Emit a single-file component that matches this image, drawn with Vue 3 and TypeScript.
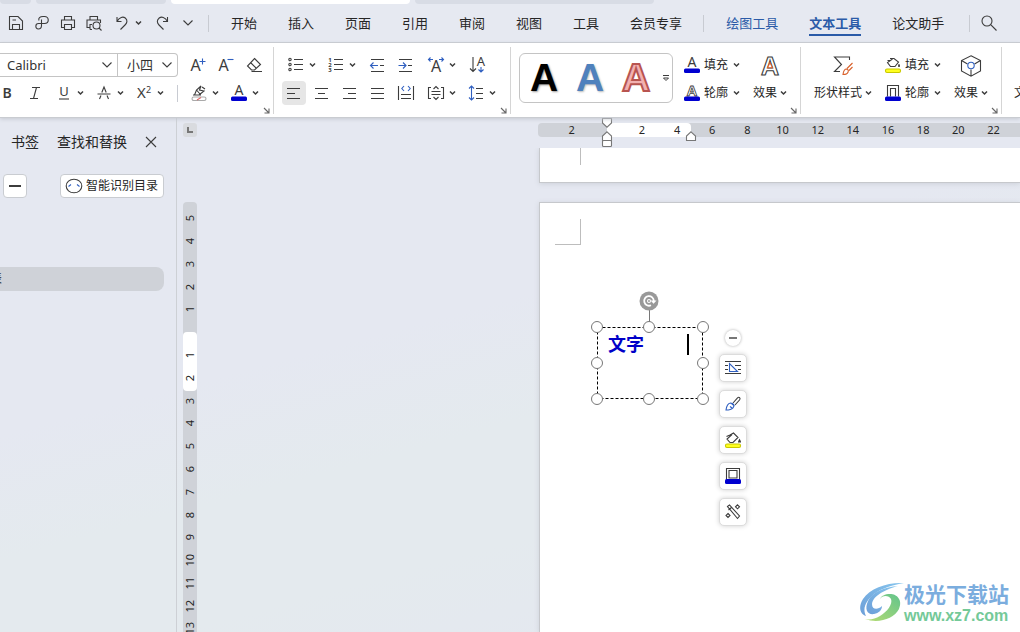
<script setup lang="ts">
import { h, ref } from 'vue'

interface Glyph {
  w: number
  h: number
  body: string
}

const INK = '#3c3c3c'
const BLUE = '#2f5fc0'
const NAVY = '#0000d0'

const letter = (t: string, x: number, y: number, size: number, extra = '') =>
  `<text x="${x}" y="${y}" font-size="${size}" text-anchor="middle" fill="${INK}" stroke="none" font-family="Noto Sans, sans-serif" ${extra}>${t}</text>`

const rules = (rows: number[][]) => `<path d="${rows.map(([x1, x2, y]) => `M${x1} ${y}H${x2}`).join('')}"/>`

const glyphs: Record<string, Glyph> = {
  save: { w: 16, h: 16, body: '<path d="M1.5 1.5H10L14.5 6V14.5H1.5ZM4.5 14.5V9.5H11.500V14.5M4.500 5H8"/>' },
  share: { w: 16, h: 16, body: '<path d="M5 5.500C4 3 6 1.500 9 1.500H10.500C15.500 1.500 15.500 8.500 10.500 8.500H4.500C1 8.500 1 14 4.300 14C6.500 14 7.500 12.500 7.500 10.500V4.500"/>' },
  print: { w: 16, h: 16, body: '<path d="M4.500 5V1.500H11.500V5M4.500 12.500H1.500V5H14.500V12.500H11.500M4.500 9.500H11.500V14.500H4.500Z"/>' },
  preview: { w: 16, h: 16, body: '<path d="M4 5V1.500H11.500V5M4 12.500H1V5H14.500V8M4 14.500V9.500H6M4 14.500H6"/><circle cx="10.500" cy="10.500" r="3.500"/><path d="M13 13L15.500 15.500"/>' },
  undo: { w: 16, h: 16, body: '<path d="M3 2V6.500H7.500M3 6.500C5.500 2 9 1.300 11.300 3C14 5.200 13 8 11 10L6.500 14.500"/>' },
  redo: { w: 16, h: 16, body: '<path d="M13.500 2V6.500H9M13.500 6.500C11 2 7.500 1.300 5.200 3C2.500 5.200 3 8 5 10L9.500 14.500"/>' },
  chevron: { w: 12, h: 8, body: '<path d="M1.500 1.500L6 6L10.500 1.500"/>' },
  caret: { w: 7, h: 6, body: '<path d="M1 1.500L3.500 4L6 1.500" stroke-width="1.500"/>' },
  search: { w: 16, h: 16, body: '<circle cx="6" cy="6" r="5"/><path d="M9.700 9.700L15.500 15.500"/>' },
  grow: { w: 16, h: 16, body: letter('A', 5.5, 14, 16) + `<path d="M9.500 4.500H15.500M12.500 1.500V7.500" stroke="${BLUE}"/>` },
  shrink: { w: 16, h: 16, body: letter('A', 5.5, 14, 16) + `<path d="M9.500 2.500H15.500" stroke="${BLUE}"/>` },
  eraser: { w: 16, h: 16, body: '<path d="M8.500 1.500L14.500 7.500L8.500 13H5.500L1.500 9ZM4.500 5.500L10.500 11.500M5.500 14.500H16"/>' },
  bold: { w: 16, h: 16, body: letter('B', 7, 13, 14, 'font-weight="600"') },
  italic: { w: 16, h: 16, body: '<path d="M4 2.500H12M2 13.500H10M8.500 2.500L5.500 13.500"/>' },
  underline: { w: 16, h: 16, body: letter('U', 8, 11, 13) + '<path d="M3 14H13"/>' },
  strike: { w: 16, h: 16, body: '<path d="M5.800 7.500L8 2L10.200 7.500M1.500 9H14.500M5 10.500L3.500 14M11 10.500L12.500 14"/>' },
  super: { w: 16, h: 16, body: letter('X', 5.5, 13, 15) + letter('2', 12.5, 8, 9) },
  marker: { w: 16, h: 16, body: '<path d="M3.500 10L5.500 5L10 1L8.500 5L13 6L8 10ZM5.500 5L9 9M11 2L14 4M2 10H10"/><rect x="1" y="12" width="14" height="3.500" rx="1.700" stroke="#aaa"/><path d="M6 15L10 12.500" stroke="#d66"/>' },
  fontcolor: { w: 16, h: 16, body: letter('A', 8, 10, 14) + `<rect x="0" y="11.500" width="16" height="4.500" rx="1.500" fill="${NAVY}" stroke="none"/>` },
  bullets: { w: 16, h: 16, body: rules([[6, 15, 2.5], [6, 15, 7.5], [6, 15, 12.5]]) + '<circle cx="2" cy="2.500" r="1.200"/><circle cx="2" cy="7.500" r="1.200"/><circle cx="2" cy="12.500" r="1.200"/>' },
  numbers: { w: 16, h: 16, body: rules([[6, 15, 2.5], [6, 15, 7.5], [6, 15, 12.5]]) + letter('1', 2, 5, 6, 'font-weight="700"') + letter('2', 2, 10, 6, 'font-weight="700"') + letter('3', 2, 15, 6, 'font-weight="700"') },
  outdent: { w: 16, h: 16, body: rules([[1, 14, 2.5], [10, 14, 8.5], [1, 14, 14.5]]) + `<path d="M8 8.500H0.500M3.500 5.500L0.500 8.500L3.500 11.500" stroke="${BLUE}"/>` },
  indent: { w: 16, h: 16, body: rules([[1, 14, 2.5], [10, 14, 8.5], [1, 14, 14.5]]) + `<path d="M0.500 8.500H8M5 5.500L8 8.500L5 11.500" stroke="${BLUE}"/>` },
  scale: { w: 16, h: 16, body: letter('A', 8, 15, 16) + `<path d="M5 2.500H0.800M2.500 0.500L0.500 2.500L2.500 4.500M11 2.500H15.200M13.500 0.500L15.500 2.500L13.500 4.500" stroke="${BLUE}"/>` },
  sort: { w: 18, h: 16, body: letter('A', 12, 9, 13) + `<path d="M4 0V14.500M1 11.500L4 14.500L7 11.500"/><path d="M12 10V15M9.500 12.500L12 15L14.500 12.500" stroke="${BLUE}"/>` },
  left: { w: 16, h: 16, body: rules([[1, 14, 3.5], [1, 9, 8.5], [1, 14, 13.5]]) },
  center: { w: 16, h: 16, body: rules([[1, 14, 3.5], [4, 11, 8.5], [1, 14, 13.5]]) },
  right: { w: 16, h: 16, body: rules([[1, 14, 3.5], [6, 14, 8.5], [1, 14, 13.5]]) },
  justify: { w: 16, h: 16, body: rules([[1, 14, 3.5], [1, 14, 8.5], [1, 14, 13.5]]) },
  distribute: { w: 16, h: 16, body: `<path d="M0.500 1V15M15.500 1V15M3 9.500H13M3 13.500H13"/><path d="M6 1L3.800 3.500L6 6M10 1L12.200 3.500L10 6" stroke="${BLUE}"/>` },
  vertical: { w: 16, h: 16, body: '<path d="M3 2.500H0.500V13.500H3M13 2.500H15.500V13.500H13M3.500 6.500H12.500M3.500 9.500H12.500M5.500 4L8 1.500L10.500 4M5.500 12L8 14.500L10.500 12"/>' },
  spacing: { w: 16, h: 16, body: rules([[8, 15, 3.5], [8, 15, 8.5], [8, 15, 13.5]]) + `<path d="M3.500 1V15M1 3.500L3.500 1L6 3.500M1 12.500L3.500 15L6 12.500" stroke="${BLUE}"/>` },
  outlinecolor: { w: 16, h: 16, body: `<text x="8" y="10.500" font-size="15" font-weight="700" text-anchor="middle" fill="#fff" stroke="${INK}" stroke-width="0.800" font-family="Liberation Sans, sans-serif">A</text><rect x="0" y="11.500" width="16" height="4.500" rx="1.500" fill="${NAVY}" stroke="none"/>` },
  effectA: { w: 22, h: 22, body: `<text x="11" y="20" font-size="25" font-weight="700" text-anchor="middle" fill="#fff" stroke="${INK}" font-family="Liberation Sans, sans-serif">A</text><path d="M11 7.500L13.500 12.800H8.500Z" fill="#fff" stroke="#d8602a"/>` },
  shape: { w: 22, h: 22, body: '<path d="M17.500 5V2H2.500L9.500 9.500L2.500 16.500H8"/><path d="M20.500 8L15 13.500M20.500 12L17 15.500M11 19.500C11.500 16 12 14 14.500 14C17.500 14.500 17 19.500 11 19.500Z" stroke="#d8602a"/>' },
  cube: { w: 22, h: 22, body: `<path d="M11 0.800L20.500 5.500V16L11 21.200L1.500 16V5.500ZM1.500 5.500L7.500 9M20.500 5.500L14.500 9M11 14.500V21"/><circle cx="11" cy="10.500" r="3.200" stroke="${BLUE}"/>` },
  fill: { w: 16, h: 16, body: '<path d="M5 1.500H9L13.500 5L10 9.500H5.500L2.500 5.500L7.500 2M2.500 3.500H5M14 7V9.500"/><circle cx="14" cy="9" r="1" fill="#3c3c3c" stroke="none"/><rect x="0.500" y="12" width="15" height="3.500" rx="1.500" fill="#ffff20" stroke="#c9c900"/>' },
  frame: { w: 16, h: 16, body: `<path d="M2.500 11.500V0.500H13.500V11.500M5.500 11.500V3.500H10.500V11.500"/><rect x="0" y="11.500" width="16" height="4.500" rx="1.500" fill="${NAVY}" stroke="none"/>` },
  launcher: { w: 7, h: 7, body: '<path d="M1 1L5.500 5.500M6 1.500V6H1.500" stroke="#666"/>' },
  more: { w: 8, h: 8, body: '<path d="M1 1.500H7M1.500 4L4 6.500L6.500 4Z" stroke-width="1"/>' },
  close: { w: 12, h: 12, body: '<path d="M1 1L11 11M11 1L1 11"/>' },
  minus: { w: 12, h: 12, body: '<path d="M0 6H12" stroke-width="2"/>' },
  face: { w: 18, h: 16, body: `<ellipse cx="9" cy="8" rx="7.800" ry="6.800"/><path d="M3.500 8.500L6 6.500M14.500 8.500L12 6.500" stroke="${BLUE}"/>` },
  wrap: { w: 16, h: 16, body: `<path d="M0 1.500H16M0 13.500H16M0 5.500H3M0 9.500H3M10 5.500H16M13 9.500H16"/><path d="M4.500 3.500V11.500H12.500Z" stroke="${BLUE}"/>` },
  brush: { w: 16, h: 16, body: `<path d="M8 7L12.500 1.800C14 0.500 16 2 14.500 4L10 9"/><path d="M1 14C1.500 10 2.500 7.500 5.500 7C8.500 7 10 9.500 8 11.800C6 14 4 14 1 14ZM5 10.500L7 12M6.500 7.500L9.500 10" stroke="${BLUE}"/>` },
  bucket: { w: 16, h: 16, body: '<path d="M5 3L8.500 1L13 5.500L8 10.500H5L2 7L7 2.500M1.500 4.500L5 3"/><path d="M14.500 6.500L16 9.500V10.500H13V9.500Z" fill="#3c3c3c" stroke="none"/><rect x="0.500" y="12" width="15" height="3.500" rx="1.500" fill="#ffff20" stroke="#c9c900"/>' },
  box: { w: 16, h: 16, body: `<path d="M1.500 11.500V0.500H14.500V11.500M4 10V2.500H12V10Z"/><rect x="0" y="11" width="16" height="5" rx="1.500" fill="${NAVY}" stroke="none"/>` },
  wand: { w: 16, h: 16, body: '<path d="M2.500 2.500L4.500 1L14.500 12L12.500 14.500ZM3.500 6L6.500 3.500"/><path d="M12.500 0.800L14.500 2.800L12.500 4.800L10.500 2.800ZM3 9.500L5 11.500L3 13.500L1 11.500Z"/>' },
  rotate: { w: 20, h: 20, body: '<circle cx="10" cy="10" r="9.500" fill="#999" stroke="none"/><path d="M12 14.300A4.800 4.800 0 1 1 14.800 10" stroke="#fff" stroke-width="1.800"/><path d="M11.500 9.500H17.500L14.600 12.800Z" fill="#fff" stroke="none"/><circle cx="10" cy="10" r="1.500" stroke="#fff"/>' },
  markdown: { w: 10, h: 10, body: '<path d="M0.500 0.500H9.500V5L5 9.200L0.500 5Z" fill="#fff" stroke="#777"/>' },
  markup: { w: 10, h: 10, body: '<path d="M5 0.800L9.500 5V9.500H0.500V5Z" fill="#fff" stroke="#777"/>' },
  markbox: { w: 10, h: 7, body: '<rect x="0.500" y="0.500" width="9" height="6" rx="1" fill="#fff" stroke="#777"/>' },
}

const Icon = (props: { name: string }) => {
  const g = glyphs[props.name]
  return h('svg', {
    class: 'icon',
    width: g.w,
    height: g.h,
    viewBox: `0 0 ${g.w} ${g.h}`,
    fill: 'none',
    stroke: INK,
    'stroke-width': 1.1,
    'aria-hidden': 'true',
    innerHTML: g.body,
  })
}

const menus = ['开始', '插入', '页面', '引用', '审阅', '视图', '工具', '会员专享']
const toolMenus = [
  { text: '绘图工具', state: 'context' },
  { text: '文本工具', state: 'context' },
  { text: '论文助手', state: '' },
]
const active = ref('文本工具')

const combosTop = ['bullets', 'numbers']
const aligns = ['left', 'center', 'right', 'justify', 'distribute']
const align = ref('left')

const across = ['2', '', '2', '4', '6', '8', '10', '12', '14', '16', '18', '20', '22']
const down = ['5', '4', '3', '2', '1', '', '1', '2', '3', '4', '5', '6', '7', '8', '9', '10', '11', '12', '13']
const floating = ['wrap', 'brush', 'bucket', 'box', 'wand']
const handles = ['nw', 'n', 'ne', 'w', 'e', 'sw', 's', 'se']
</script>

<template>
  <div class="app">
    <div class="tabstrip">
      <span class="doc first"></span>
      <span class="doc second"></span>
      <span class="doc current"></span>
      <span class="doc last"></span>
    </div>

    <header class="menubar">
      <div class="quick">
        <button v-for="n in ['save', 'share', 'print', 'preview']" :key="n" :aria-label="n"><Icon :name="n" /></button>
        <button class="undo" aria-label="undo"><Icon name="undo" /><Icon name="caret" /></button>
        <button class="redo" aria-label="redo"><Icon name="redo" /></button>
        <button class="expand" aria-label="more"><Icon name="chevron" /></button>
      </div>
      <i class="bar"></i>
      <nav class="menus">
        <button v-for="m in menus" :key="m">{{ m }}</button>
      </nav>
      <i class="bar"></i>
      <nav class="menus">
        <button v-for="m in toolMenus" :key="m.text" :class="[m.state, { active: active === m.text }]" @click="active = m.text">{{ m.text }}</button>
      </nav>
      <i class="bar late"></i>
      <button class="search" aria-label="search"><Icon name="search" /></button>
    </header>

    <section class="ribbon">
      <div class="group font">
        <div class="row">
          <div class="picks">
            <label class="pick family"><select aria-label="字体"><option>Calibri</option></select><Icon name="chevron" /></label>
            <label class="pick size"><select aria-label="字号"><option>小四</option></select><Icon name="chevron" /></label>
          </div>
          <div class="tight">
            <button v-for="n in ['grow', 'shrink', 'eraser']" :key="n" class="tool" :aria-label="n"><Icon :name="n" /></button>
          </div>
        </div>
        <div class="row styles">
          <button class="tool narrow" aria-label="bold"><Icon name="bold" /></button>
          <button class="tool narrow" aria-label="italic"><Icon name="italic" /></button>
          <button v-for="n in ['underline', 'strike', 'super']" :key="n" class="combo" :aria-label="n"><Icon :name="n" /><Icon name="caret" /></button>
          <i class="bar"></i>
          <button v-for="n in ['marker', 'fontcolor']" :key="n" class="combo" :aria-label="n"><Icon :name="n" /><Icon name="caret" /></button>
        </div>
        <button class="launch" aria-label="font settings"><Icon name="launcher" /></button>
      </div>

      <div class="group paragraph">
        <div class="row lists">
          <button v-for="n in combosTop" :key="n" class="combo" :aria-label="n"><Icon :name="n" /><Icon name="caret" /></button>
          <div class="tight">
            <button class="tool" aria-label="outdent"><Icon name="outdent" /></button>
            <button class="tool" aria-label="indent"><Icon name="indent" /></button>
          </div>
          <button class="combo" aria-label="scale"><Icon name="scale" /><Icon name="caret" /></button>
          <button class="tool" aria-label="sort"><Icon name="sort" /></button>
        </div>
        <div class="row">
          <div class="tight">
            <button v-for="n in aligns" :key="n" class="tool" :class="{ on: align === n }" :aria-label="n" @click="align = n"><Icon :name="n" /></button>
          </div>
          <button class="combo" aria-label="vertical"><Icon name="vertical" /><Icon name="caret" /></button>
          <button class="combo" aria-label="spacing"><Icon name="spacing" /><Icon name="caret" /></button>
        </div>
        <button class="launch" aria-label="paragraph settings"><Icon name="launcher" /></button>
      </div>

      <div class="group wide art">
        <div class="gallery">
          <button class="sample black">A</button>
          <button class="sample blue">A</button>
          <button class="sample red">A</button>
          <button class="more" aria-label="more styles"><Icon name="more" /></button>
        </div>
        <div class="stack">
          <button class="labelled"><Icon name="fontcolor" /><span>填充</span><Icon name="caret" /></button>
          <button class="labelled"><Icon name="outlinecolor" /><span>轮廓</span><Icon name="caret" /></button>
        </div>
        <button class="big"><Icon name="effectA" /><span class="caption">效果<Icon name="caret" /></span></button>
        <button class="launch" aria-label="text settings"><Icon name="launcher" /></button>
      </div>

      <div class="group wide shapes">
        <button class="big"><Icon name="shape" /><span class="caption">形状样式<Icon name="caret" /></span></button>
        <div class="stack">
          <button class="labelled"><Icon name="fill" /><span>填充</span><Icon name="caret" /></button>
          <button class="labelled"><Icon name="frame" /><span>轮廓</span><Icon name="caret" /></button>
        </div>
        <button class="big"><Icon name="cube" /><span class="caption">效果<Icon name="caret" /></span></button>
        <button class="launch" aria-label="shape settings"><Icon name="launcher" /></button>
      </div>

      <div class="group wide rest">
        <button class="big"><span class="caption">文</span></button>
      </div>
    </section>

    <main class="workspace">
      <aside class="sidebar">
        <div class="panel-tabs">
          <button>书签</button>
          <button>查找和替换</button>
          <button class="close" aria-label="close"><Icon name="close" /></button>
        </div>
        <div class="panel-tools">
          <button class="boxed square" aria-label="collapse"><Icon name="minus" /></button>
          <button class="boxed smart"><Icon name="face" />智能识别目录</button>
        </div>
        <div class="entry"><span>表</span></div>
      </aside>

      <div class="gutter">
        <button class="tabstop" aria-label="tab stop">
          <svg width="6" height="6" viewBox="0 0 6 6" fill="none" stroke="#777" stroke-width="2"><path d="M1 0V5H6" /></svg>
        </button>
        <div class="vruler">
          <i class="span"></i>
          <span v-for="(n, i) in down" :key="i"><b>{{ n }}</b></span>
        </div>
      </div>

      <div class="document">
        <div class="hruler">
          <i class="span"></i>
          <span v-for="(n, i) in across" :key="i">{{ n }}</span>
          <Icon class="mark first-line" name="markdown" />
          <Icon class="mark hanging" name="markup" />
          <Icon class="mark base" name="markbox" />
          <Icon class="mark end" name="markup" />
        </div>
        <div class="sheet previous"><i class="crop"></i></div>
        <div class="sheet page">
          <i class="crop corner"></i>
          <div class="textbox">
            <svg class="edge" width="100%" height="100%"><rect x="0.5" y="0.5" width="105" height="71" fill="none" stroke="#000" stroke-dasharray="3 2" /></svg>
            <p>文字</p>
            <i class="cursor"></i>
            <i class="stem"></i>
            <Icon class="spin" name="rotate" />
            <i v-for="d in handles" :key="d" class="handle" :class="d"></i>
          </div>
          <div class="floating">
            <button class="fold" aria-label="fold"><i></i></button>
            <button v-for="n in floating" :key="n" class="float" :aria-label="n"><Icon :name="n" /></button>
          </div>
        </div>
      </div>
    </main>

    <div class="watermark">
      <svg width="44" height="42" viewBox="0 0 44 42" fill="none">
        <defs>
          <linearGradient id="wave" x1="0" y1="1" x2="1" y2="0"><stop offset="0" stop-color="#6d9fd8" /><stop offset="1" stop-color="#86c5ee" /></linearGradient>
          <linearGradient id="leaf" x1="0" y1="1" x2="1" y2="0"><stop offset="0" stop-color="#b7dc72" /><stop offset="1" stop-color="#62c48c" /></linearGradient>
        </defs>
        <path d="M44 1C28 0 10 6 3 17C-2 25 0 32 6 34C2 26 6 19 14 12C22 6 33 3 44 1Z" fill="url(#wave)" />
        <path d="M38 4C25 5 12 10 8 19C4 28 8 33 14 32C19 31 22 28 22 24C18 28 12 28 12 22C13 13 27 7 38 4Z" fill="url(#wave)" />
        <path d="M20 17C22 13 29 13 31 17C33 22 27 30 20 34C15 37 10 38 5 37C18 42 34 37 39 27C43 18 37 12 30 12C25 12 21 14 20 17Z" fill="url(#leaf)" />
      </svg>
      <div><strong>极光下载站</strong><span>www.xz7.com</span></div>
    </div>
  </div>
</template>

<style>
body {
  margin: 0;
  overflow: hidden;
}
</style>

<style scoped>
.app {
  position: relative;
  display: flex;
  flex-direction: column;
  height: 100vh;
  overflow: hidden;
  background: linear-gradient(165deg, #e5e8f1 48%, #e4eaee 62%, #e4eaee 75%, #e4e8f0 90%);
  color: #262626;
  font-family: "Noto Sans", "Noto Sans CJK SC", sans-serif;
  font-size: 12px;
  line-height: 20px;
}
button {
  display: flex;
  align-items: center;
  justify-content: center;
  flex: none;
  margin: 0;
  padding: 0;
  border: 0;
  background: none;
  color: inherit;
  font: inherit;
  white-space: nowrap;
}
.icon {
  display: block;
  flex: none;
  overflow: visible;
}
.bar {
  width: 1px;
  height: 17px;
  background: #c8cbd2;
}

.tabstrip {
  display: flex;
  flex: none;
  gap: 5px;
  height: 4px;
  background: #e6e9f1;
}
.doc {
  flex: none;
  border-radius: 0 0 4px 4px;
  background: #d8dce5;
}
.first { width: 31px; }
.second { width: 130px; }
.current { width: 239px; background: #fff; }
.last { width: 239px; }

.menubar {
  display: flex;
  flex: none;
  align-items: center;
  height: 38px;
  border-bottom: 1px solid #c9ccd1;
  background: #e6e9f1;
  font-size: 13px;
}
.quick {
  display: flex;
  align-items: center;
  gap: 10px;
  padding: 0 14px 0 8px;
}
.undo {
  gap: 5px;
  margin-left: 2px;
}
.redo { margin-left: 2px; }
.expand { margin-left: 2px; }
.menus {
  display: flex;
  gap: 31px;
  padding: 0 21px 0 22px;
}
.menus button {
  height: 26px;
  box-sizing: border-box;
  border-top: 2px solid transparent;
  border-bottom: 2px solid transparent;
}
.menus .context { color: #2b5ba8; }
.menus .active {
  border-bottom-color: #2b5ba8;
  font-weight: 700;
}
.late { margin-left: 4px; }
.search { margin-left: 11px; }

.ribbon {
  display: flex;
  flex: none;
  padding: 4px 0 3px;
  border-bottom: 1px solid #c9ccd1;
  background: #fff;
  box-shadow: 0 1px 4px #c4c8d0;
  overflow: hidden;
  z-index: 1;
}
.group {
  position: relative;
  display: flex;
  flex: none;
  flex-direction: column;
  gap: 4px;
  padding: 6px 0 9px;
  border-right: 1px solid #d5d5d5;
}
.font { padding-right: 7px; }
.paragraph { padding-left: 8px; padding-right: 12px; }
.wide {
  flex-direction: row;
  align-items: flex-start;
  gap: 9px;
  padding-right: 11px;
}
.art { padding-left: 8px; }
.shapes { padding-left: 11px; }
.rest { padding-left: 10px; border: 0; }
.row {
  display: flex;
  align-items: center;
  gap: 8px;
}
.styles { margin-left: -2px; }
.styles .bar { margin: 0 3px; }
.lists { padding-left: 4px; }
.tight {
  display: flex;
  gap: 4px;
}
.tool {
  width: 24px;
  height: 24px;
  border-radius: 4px;
}
.tool.narrow { width: 20px; }
.tool.on { background: #e6e6e6; }
.combo {
  gap: 5px;
  height: 24px;
  padding: 0 2px;
}
.launch {
  position: absolute;
  right: 3px;
  bottom: 0;
}
.picks {
  display: flex;
  height: 24px;
  box-sizing: border-box;
  border: 1px solid #c4c4c4;
  border-left: 0;
  border-radius: 0 4px 4px 0;
}
.pick {
  display: flex;
  align-items: center;
  padding-right: 4px;
}
.family { width: 113px; }
.size { width: 55px; border-left: 1px solid #c4c4c4; }
.pick select {
  flex: 1;
  min-width: 0;
  padding: 0 0 0 7px;
  border: 0;
  outline: 0;
  appearance: none;
  background: none;
  color: #333;
  font: inherit;
  font-size: 13px;
}
.size select { padding-left: 9px; }

.gallery {
  display: flex;
  align-items: center;
  height: 50px;
  width: 154px;
  box-sizing: border-box;
  border: 1px solid #c4c4c4;
  border-radius: 6px;
}
.sample {
  width: 46px;
  height: 48px;
  font: bold 39px/48px "Liberation Sans", sans-serif;
}
.gallery .sample:first-child { margin-left: 1px; }
.black { color: #000; text-shadow: 1px 1px 2px #999; }
.blue { color: #4f81bd; text-shadow: 1px 1px 2px #bbb; }
.red { color: #f2b0b0; -webkit-text-stroke: 2px #b85450; }
.more { margin-left: 3px; }
.stack {
  display: flex;
  flex-direction: column;
  gap: 4px;
}
.labelled {
  height: 24px;
  padding: 0 2px;
}
.labelled span { padding: 0 5px 0 4px; }
.big {
  flex-direction: column;
  justify-content: space-between;
  height: 52px;
  padding: 2px;
  box-sizing: border-box;
}
.caption {
  display: flex;
  align-items: center;
  gap: 3px;
}
.rest .big { justify-content: flex-end; }

.workspace {
  display: flex;
  flex: 1;
  min-height: 0;
}
.sidebar {
  flex: none;
  width: 176px;
  border-right: 1px solid #cdd0d5;
}
.panel-tabs {
  display: flex;
  align-items: center;
  gap: 18px;
  padding: 14px 11px 0;
  font-size: 14px;
}
.panel-tools {
  display: flex;
  justify-content: space-between;
  padding: 22px 12px 0 3px;
}
.boxed {
  height: 24px;
  box-sizing: border-box;
  border: 1px solid #c9ccd1;
  border-radius: 4px;
  background: #fff;
}
.square { width: 24px; }
.smart {
  gap: 3px;
  padding: 0 5px 0 4px;
}
.entry {
  height: 24px;
  margin: 69px 12px 0 0;
  border-radius: 0 8px 8px 0;
  background: #cfd2d8;
  overflow: hidden;
  line-height: 24px;
}
.entry span { margin-left: -10px; }

.gutter {
  display: flex;
  flex: none;
  flex-direction: column;
  width: 14px;
  margin-left: 6px;
}
.tabstop {
  width: 14px;
  height: 14px;
  margin-top: 5px;
  border-radius: 3px;
  background: #d9dbdf;
}
.vruler {
  position: relative;
  display: flex;
  flex: 1;
  flex-direction: column;
  margin: 65px 0 -8px;
  padding-top: 5px;
  border-radius: 4px;
  background: #cfd2d8;
  font-size: 11px;
  line-height: 14px;
}
.span {
  position: absolute;
  border-radius: 4px;
  background: #fff;
}
.vruler .span {
  top: 130px;
  left: 0;
  width: 14px;
  height: 59px;
}
.vruler span {
  position: relative;
  display: flex;
  flex: 1;
  align-items: center;
  justify-content: center;
  min-height: 0;
}
.vruler b {
  font-weight: 400;
  writing-mode: vertical-rl;
  transform: rotate(180deg);
}

.document {
  display: flex;
  flex: 1;
  flex-direction: column;
  min-width: 0;
  margin-left: 341px;
}
.hruler {
  position: relative;
  display: flex;
  flex: none;
  height: 14px;
  margin: 5px 0 11px;
  padding: 0 9px 0 16px;
  border-radius: 4px 0 0 4px;
  background: #cfd2d8;
  font-size: 11px;
  line-height: 14px;
}
.hruler .span {
  left: 69px;
  top: 0;
  width: 84px;
  height: 14px;
}
.hruler span {
  position: relative;
  flex: 1;
  text-align: center;
}
.mark { position: absolute; }
.first-line { left: 64px; top: -5px; }
.hanging { left: 64px; top: 8px; }
.base { left: 64px; top: 17px; }
.end { left: 148px; top: 8px; }

.sheet {
  position: relative;
  margin-left: 1px;
  border: 1px solid #c6c8cc;
  border-right: 0;
  background: #fff;
  box-shadow: 0 1px 5px #cdd1d9;
}
.previous {
  flex: none;
  height: 34px;
  margin-bottom: 19px;
  border-top: 0;
  clip-path: inset(0 0 -8px -8px);
}
.page {
  flex: 1;
  border-bottom: 0;
}
.crop {
  position: absolute;
  left: 15px;
  top: 0;
  width: 25px;
  height: 17px;
  border-right: 1px solid #bdbdbd;
}
.corner {
  top: 16px;
  height: 25px;
  border-bottom: 1px solid #bdbdbd;
}
.textbox {
  position: absolute;
  left: 57px;
  top: 124px;
  width: 106px;
  height: 72px;
}
.edge {
  position: absolute;
  inset: 0;
}
.textbox p {
  margin: 5px 0 0 11px;
  color: #0000c8;
  font-size: 18px;
  font-weight: 700;
  line-height: 24px;
}
.cursor {
  position: absolute;
  left: 90px;
  top: 7px;
  width: 2px;
  height: 21px;
  background: #000;
}
.stem {
  position: absolute;
  left: 52px;
  top: -18px;
  width: 1px;
  height: 18px;
  background: #777;
}
.spin {
  position: absolute;
  left: 42px;
  top: -36px;
}
.handle {
  position: absolute;
  width: 12px;
  height: 12px;
  box-sizing: border-box;
  border: 1px solid #777;
  border-radius: 50%;
  background: #fff;
}
.nw, .w, .sw { left: -6px; }
.n, .s { left: 46px; }
.ne, .e, .se { right: -6px; }
.nw, .n, .ne { top: -6px; }
.w, .e { top: 30px; }
.sw, .s, .se { bottom: -6px; }

.floating {
  position: absolute;
  left: 179px;
  top: 127px;
  display: flex;
  flex-direction: column;
  align-items: center;
  gap: 8px;
}
.fold {
  width: 16px;
  height: 16px;
  border-radius: 50%;
  background: #fff;
  box-shadow: 0 0 3px #aaa;
}
.fold i {
  width: 8px;
  height: 2px;
  background: #777;
}
.float {
  width: 28px;
  height: 28px;
  box-sizing: border-box;
  border: 1px solid #dcdcdc;
  border-radius: 5px;
  background: #fff;
  box-shadow: 0 0 5px #d0d0d0;
}

.watermark {
  position: absolute;
  right: 11px;
  bottom: 7px;
  display: flex;
  align-items: center;
}
.watermark div {
  display: flex;
  flex-direction: column;
}
.watermark strong {
  color: #7badde;
  font-size: 21px;
  line-height: 26px;
}
.watermark span {
  color: #74c998;
  font: bold 16px/18px "Liberation Sans", sans-serif;
}
</style>
